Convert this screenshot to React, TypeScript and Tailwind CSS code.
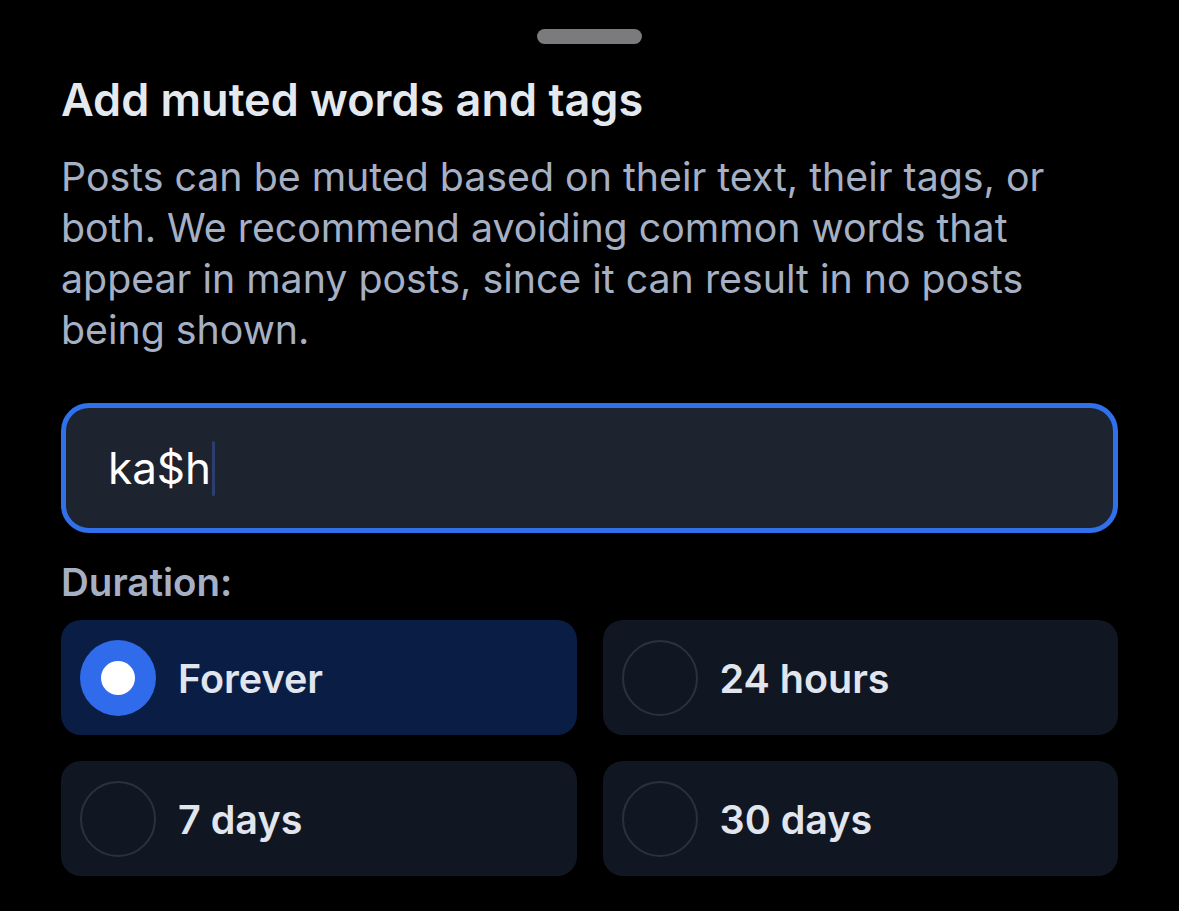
import { useState } from 'react';

const options = ['Forever', '24 hours', '7 days', '30 days'];

function Radio({ checked }: { checked: boolean }) {
  if (checked) {
    return (
      <div className="flex h-[76px] w-[76px] shrink-0 items-center justify-center rounded-full bg-[#2f6beb]">
        <div className="h-[34px] w-[34px] rounded-full bg-white" />
      </div>
    );
  }
  return <div className="h-[76px] w-[76px] shrink-0 rounded-full border-2 border-[#2a313e]" />;
}

export default function App() {
  const [duration, setDuration] = useState('Forever');
  const [value, setValue] = useState('ka$h');

  return (
    <div className="h-[911px] w-full overflow-hidden bg-black font-['Inter',sans-serif]">
      {/* drag handle */}
      <div className="flex justify-center pt-[29px]">
        <div className="h-[15px] w-[105px] rounded-full bg-[#7b7b7d]" />
      </div>

      <div className="px-[61px]">
        <h1 className="mt-[30px] text-[45px] leading-[52px] font-semibold text-[#e4e9f0]">
          Add muted words and tags
        </h1>
        <p className="mt-[25px] text-[39.3px] leading-[51px] text-[#a6b0c4]">
          Posts can be muted based on their text, their tags, or both. We recommend avoiding common words that
          appear in many posts, since it can result in no posts being shown.
        </p>

        {/* input */}
        <div className="mt-[48px] flex h-[130px] items-center rounded-[28px] border-[5px] border-[#3070ea] bg-[#1e2330] pl-[42px]">
          <span className="text-[44px] text-white">{value}</span>
          <span className="ml-[1px] h-[55px] w-[3px] rounded-full bg-[#2c3d70]" />
          <input className="hidden" value={value} onChange={(e) => setValue(e.target.value)} />
        </div>

        <div className="mt-[26px] text-[38.5px] leading-[46px] font-semibold text-[#a6b0c4]">Duration:</div>

        <div className="mt-[15px] grid grid-cols-2 gap-[26px]">
          {options.map((opt) => {
            const checked = duration === opt;
            return (
              <button
                key={opt}
                onClick={() => setDuration(opt)}
                className={`flex h-[115px] items-center gap-[22px] rounded-[20px] pl-[19px] text-left ${
                  checked ? 'bg-[#0a1d45]' : 'bg-[#111722]'
                }`}
              >
                <Radio checked={checked} />
                <span className="pt-[3px] text-[39.5px] leading-[48px] font-semibold text-[#e1e6ee]">{opt}</span>
              </button>
            );
          })}
        </div>
      </div>
    </div>
  );
}
